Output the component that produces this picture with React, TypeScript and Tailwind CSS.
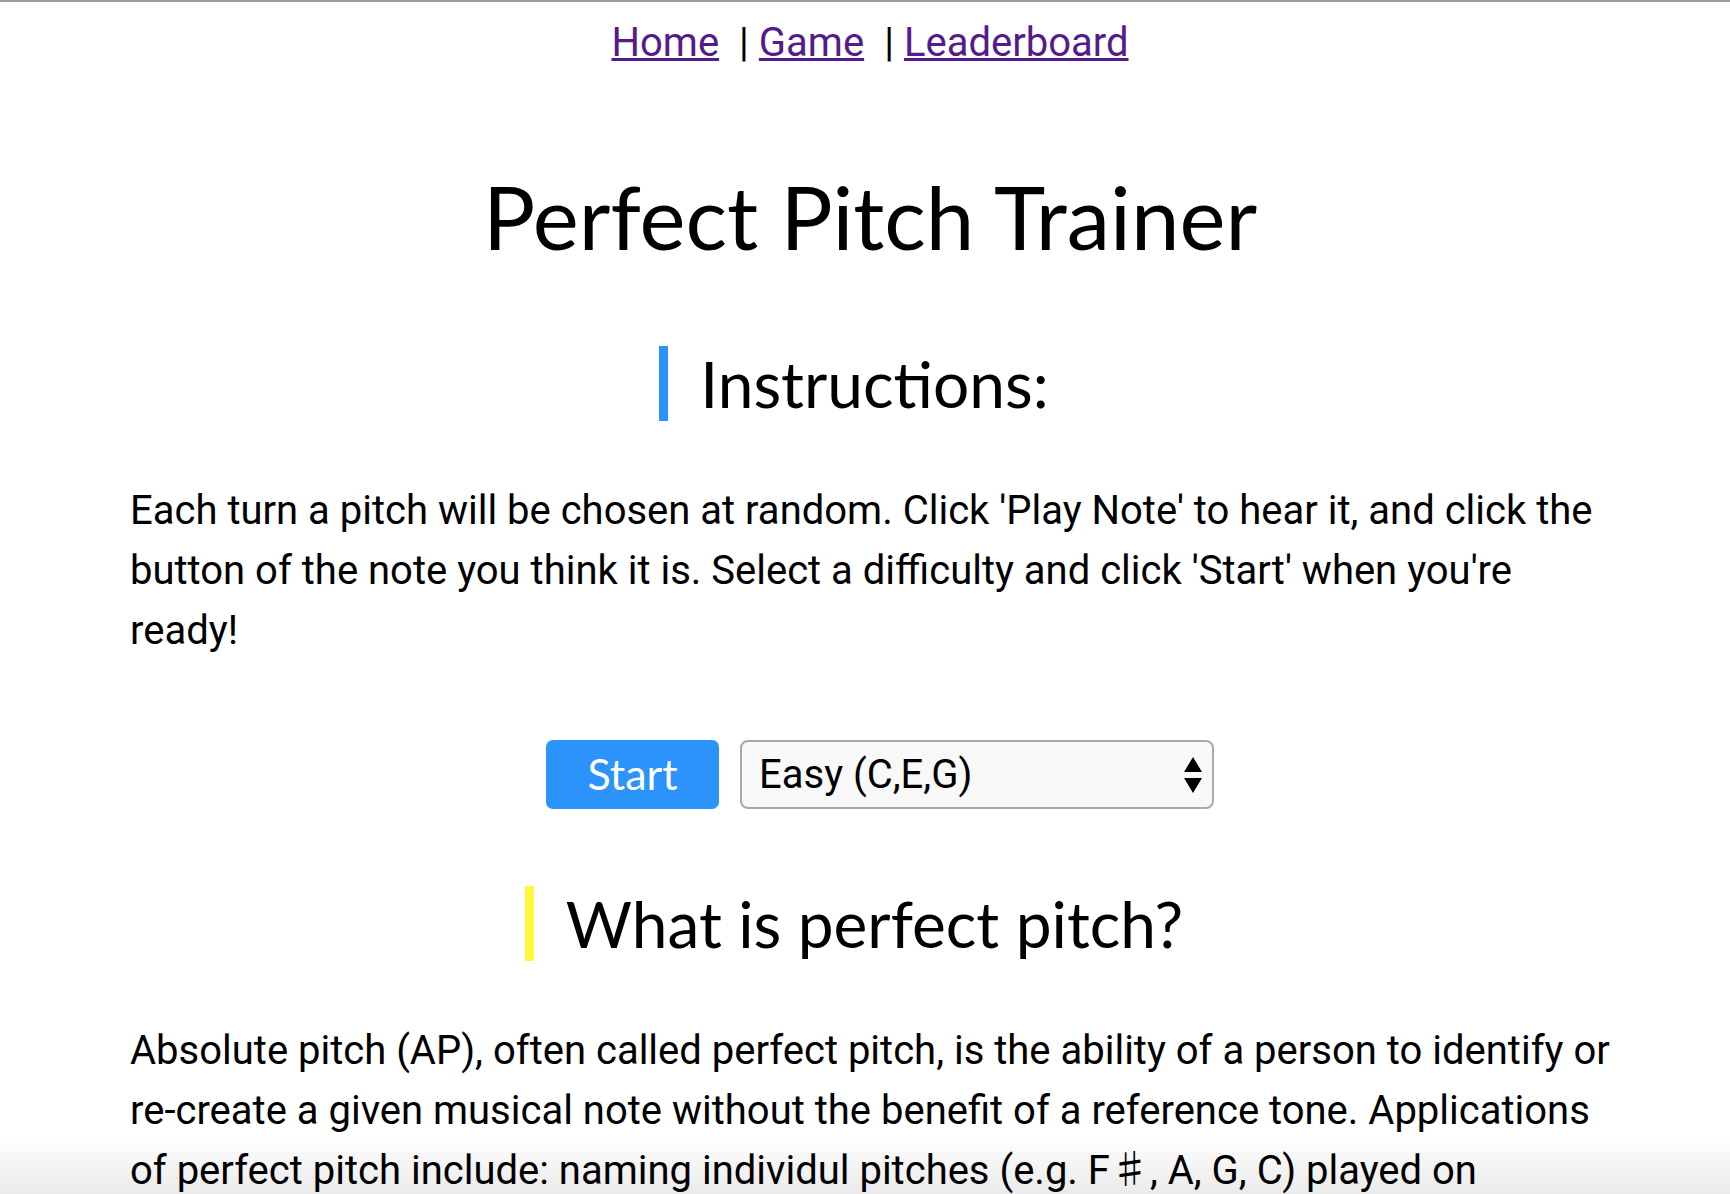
import React from "react";

const linkCls = "text-[#551a8b] underline decoration-[3px]";

const App = () => {
  return (
    <div className="relative min-h-screen border-t-2 border-[#9b9b9b] bg-white font-['Roboto',sans-serif] text-black">
      <nav className="flex justify-center pt-[17px] pl-[10px] text-[40px] leading-[48px]">
        <a href="#" className={linkCls}>
          Home
        </a>
        <span className="ml-[20px] mr-[10px]">|</span>
        <a href="#" className={linkCls}>
          Game
        </a>
        <span className="ml-[20px] mr-[10px]">|</span>
        <a href="#" className={linkCls}>
          Leaderboard
        </a>
      </nav>

      <main className="pl-[130px] pr-[120px]">
        <h1 className="mt-[100px] text-center font-['Lato',sans-serif] text-[87px] leading-[100px]">
          Perfect Pitch Trainer
        </h1>

        <div className="mt-[79px] flex justify-center">
          <h2 className="border-l-[9px] border-[#2b93fa] px-8 font-['Lato',sans-serif] text-[64px] leading-[75px]">
            Instructions:
          </h2>
        </div>

        <p className="mt-[60px] text-[40px] leading-[60px]">
          Each turn a pitch will be chosen at random. Click 'Play Note' to hear it, and click the button of the note
          you think it is. Select a difficulty and click 'Start' when you're ready!
        </p>

        <div className="mt-[79px] flex justify-center gap-[21px] pl-[20px]">
          <button className="h-[69px] w-[173px] rounded-[7px] bg-[#2b93fa] font-['Lato',sans-serif] text-[43px] text-white">
            Start
          </button>
          <div className="relative">
            <select className="h-[69px] w-[474px] appearance-none rounded-[8px] border-2 border-[#a8a8a8] bg-[#f8f8f8] pl-[17px] text-[40px] text-black outline-none">
              <option>Easy (C,E,G)</option>
              <option>Medium (C,D,E,F,G,A,B)</option>
              <option>Hard (All 12 notes)</option>
            </select>
            <svg
              className="pointer-events-none absolute right-[11px] top-1/2 -translate-y-1/2"
              width="20"
              height="36"
              viewBox="0 0 20 36"
            >
              <path d="M10 0 L19 15 H1 Z" fill="black" />
              <path d="M10 36 L19 21 H1 Z" fill="black" />
            </svg>
          </div>
        </div>

        <div className="mt-[77px] flex justify-center">
          <h2 className="border-l-[9px] border-[#fdf83a] px-8 font-['Lato',sans-serif] text-[64px] leading-[75px]">
            What is perfect pitch?
          </h2>
        </div>

        <p className="mt-[60px] pb-[80px] text-[40px] leading-[60px]">
          Absolute pitch (AP), often called perfect pitch, is the ability of a person to identify or re-create a given
          musical note without the benefit of a reference tone. Applications of perfect pitch include: naming individul
          pitches (e.g. F<span className="font-['Noto_Sans_CJK_JP',sans-serif] leading-[0]">♯</span>, A, G, C) played on
          instruments, and naming the key of a given piece of music.
        </p>
      </main>

      <div className="pointer-events-none fixed bottom-0 left-0 right-0 h-[60px] bg-gradient-to-b from-transparent to-black/[0.08]" />
    </div>
  );
};

export default App;
